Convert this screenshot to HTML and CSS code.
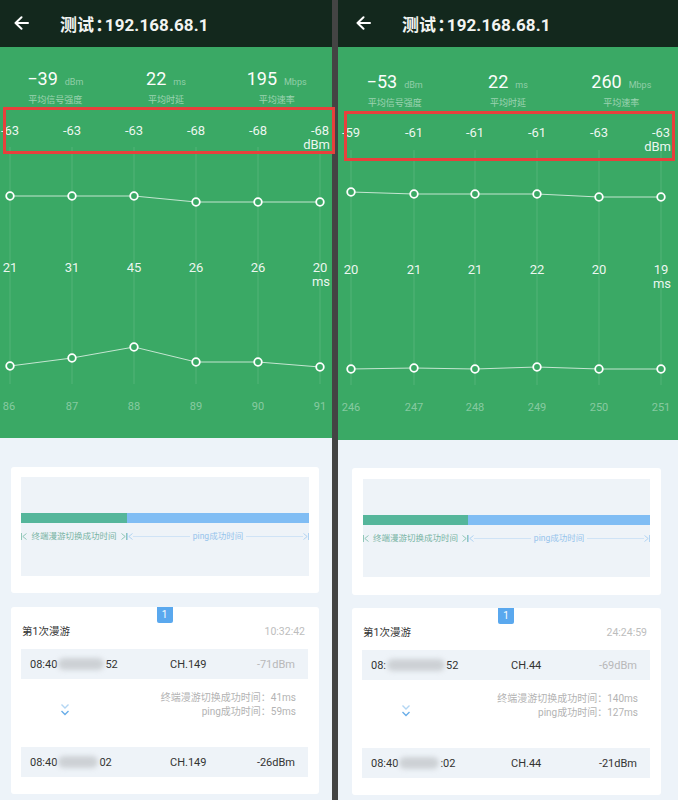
FILE: index.html
```html
<!DOCTYPE html>
<html lang="zh-CN">
<head>
<meta charset="utf-8">
<title>漫游测试</title>
<link rel="stylesheet" href="styles.css">
</head>
<body>
<div class="screen">
  <section class="panel panel-a">
    <header class="topbar">
      <svg class="back" width="15" height="14" viewBox="0 0 15 14"><path d="M1.5 7H14M7.5 1.2L1.5 7l6 5.8" fill="none" stroke="#fff" stroke-width="2" stroke-linecap="round" stroke-linejoin="round"/></svg>
      <h1 class="title">测试<span class="colon">：</span>192.168.68.1</h1>
    </header>
    <div class="green">
      <div class="stats">
        <div class="stat"><div class="stat-val"><span class="num">−39</span><span class="unit">dBm</span></div><div class="stat-label">平均信号强度</div></div>
        <div class="stat"><div class="stat-val"><span class="num">22</span><span class="unit">ms</span></div><div class="stat-label">平均时延</div></div>
        <div class="stat"><div class="stat-val"><span class="num">195</span><span class="unit">Mbps</span></div><div class="stat-label">平均速率</div></div>
      </div>
      <svg class="chart" width="332" height="331" viewBox="0 0 332 331">
        <g class="grid">
          <line x1="10" y1="40" x2="10" y2="277"/><line x1="72" y1="40" x2="72" y2="277"/><line x1="134" y1="40" x2="134" y2="277"/><line x1="196" y1="40" x2="196" y2="277"/><line x1="258" y1="40" x2="258" y2="277"/><line x1="320" y1="40" x2="320" y2="277"/>
        </g>
        <g class="val">
          <text x="10" y="28">-63</text><text x="72" y="28">-63</text><text x="134" y="28">-63</text><text x="196" y="28">-68</text><text x="258" y="28">-68</text><text x="320" y="28">-68</text>
          <text class="u" x="330" y="42">dBm</text>
          <text x="10" y="165">21</text><text x="72" y="165">31</text><text x="134" y="165">45</text><text x="196" y="165">26</text><text x="258" y="165">26</text><text x="320" y="165">20</text>
          <text class="u" x="330" y="179">ms</text>
        </g>
        <polyline class="link" points="10,89 72,89 134,89 196,95 258,95 320,95"/>
        <polyline class="link" points="10,259 72,251 134,240 196,255 258,255 320,260"/>
        <g class="dot">
          <circle cx="10" cy="89" r="3.8"/><circle cx="72" cy="89" r="3.8"/><circle cx="134" cy="89" r="3.8"/><circle cx="196" cy="95" r="3.8"/><circle cx="258" cy="95" r="3.8"/><circle cx="320" cy="95" r="3.8"/>
          <circle cx="10" cy="259" r="3.8"/><circle cx="72" cy="251" r="3.8"/><circle cx="134" cy="240" r="3.8"/><circle cx="196" cy="255" r="3.8"/><circle cx="258" cy="255" r="3.8"/><circle cx="320" cy="260" r="3.8"/>
        </g>
        <g class="idx">
          <text x="9" y="303">86</text><text x="72" y="303">87</text><text x="134" y="303">88</text><text x="196" y="303">89</text><text x="258" y="303">90</text><text x="320" y="303">91</text>
        </g>
      </svg>
      <div class="hilite"></div>
    </div>
    <div class="body">
      <div class="card bar-card">
        <div class="bar-box">
          <div class="bar"><div class="bar-a" style="width:36.8%"></div><div class="bar-b"></div></div>
          <div class="legend">
            <div class="seg seg-a" style="width:36.8%">
              <svg class="cap" width="6" height="7" viewBox="0 0 6 7"><path d="M0.5 0v7M5.5 0.5L1.8 3.5l3.7 3" fill="none" stroke="currentColor" stroke-width="0.9"/></svg>
              <span class="seg-text">终端漫游切换成功时间</span>
              <svg class="cap" width="6" height="7" viewBox="0 0 6 7"><path d="M5.5 0v7M0.5 0.5L4.2 3.5l-3.7 3" fill="none" stroke="currentColor" stroke-width="0.9"/></svg>
            </div>
            <div class="seg seg-b">
              <svg class="cap" width="6" height="7" viewBox="0 0 6 7"><path d="M0.5 0v7M5.5 0.5L1.8 3.5l3.7 3" fill="none" stroke="currentColor" stroke-width="0.9"/></svg>
              <span class="rule"></span>
              <span class="seg-text">ping成功时间</span>
              <span class="rule"></span>
              <svg class="cap" width="6" height="7" viewBox="0 0 6 7"><path d="M5.5 0v7M0.5 0.5L4.2 3.5l-3.7 3" fill="none" stroke="currentColor" stroke-width="0.9"/></svg>
            </div>
          </div>
        </div>
      </div>
      <div class="card roam-card">
        <div class="badge">1</div>
        <div class="roam-head"><span>第1次漫游</span><span class="time">10:32:42</span></div>
        <div class="ap-row">
          <span class="mac">08:40<span class="blur b46"></span>52</span>
          <span>CH.149</span>
          <span class="rssi old">-71dBm</span>
        </div>
        <div class="roam-mid">
          <svg class="chev" width="10" height="16" viewBox="0 0 10 16"><path d="M1.5 1.5L5 5l3.5-3.5" fill="none" stroke="#b3d6f3" stroke-width="1.4"/><path d="M1.5 8L5 11.5 8.5 8" fill="none" stroke="#6aaee9" stroke-width="1.4"/></svg>
          <div class="roam-times"><div>终端漫游切换成功时间：41ms</div><div>ping成功时间：59ms</div></div>
        </div>
        <div class="ap-row">
          <span class="mac">08:40<span class="blur b40"></span>02</span>
          <span>CH.149</span>
          <span class="rssi">-26dBm</span>
        </div>
      </div>
    </div>
  </section>

  <div class="divider"></div>

  <section class="panel panel-b">
    <header class="topbar">
      <svg class="back" width="15" height="14" viewBox="0 0 15 14"><path d="M1.5 7H14M7.5 1.2L1.5 7l6 5.8" fill="none" stroke="#fff" stroke-width="2" stroke-linecap="round" stroke-linejoin="round"/></svg>
      <h1 class="title">测试<span class="colon">：</span>192.168.68.1</h1>
    </header>
    <div class="green">
      <div class="stats">
        <div class="stat"><div class="stat-val"><span class="num">−53</span><span class="unit">dBm</span></div><div class="stat-label">平均信号强度</div></div>
        <div class="stat"><div class="stat-val"><span class="num">22</span><span class="unit">ms</span></div><div class="stat-label">平均时延</div></div>
        <div class="stat"><div class="stat-val"><span class="num">260</span><span class="unit">Mbps</span></div><div class="stat-label">平均速率</div></div>
      </div>
      <svg class="chart" width="340" height="330" viewBox="0 0 340 330">
        <g class="grid">
          <line x1="13" y1="40" x2="13" y2="275"/><line x1="76" y1="40" x2="76" y2="275"/><line x1="137" y1="40" x2="137" y2="275"/><line x1="199" y1="40" x2="199" y2="275"/><line x1="261" y1="40" x2="261" y2="275"/><line x1="323" y1="40" x2="323" y2="275"/>
        </g>
        <g class="val">
          <text x="13" y="27">-59</text><text x="76" y="27">-61</text><text x="137" y="27">-61</text><text x="199" y="27">-61</text><text x="261" y="27">-63</text><text x="323" y="27">-63</text>
          <text class="u" x="333" y="41">dBm</text>
          <text x="13" y="164">20</text><text x="76" y="164">21</text><text x="137" y="164">21</text><text x="199" y="164">22</text><text x="261" y="164">20</text><text x="323" y="164">19</text>
          <text class="u" x="333" y="178">ms</text>
        </g>
        <polyline class="link" points="13,82 76,84 137,84 199,84 261,87 323,87"/>
        <polyline class="link" points="13,259 76,258 137,259 199,257 261,259 323,259"/>
        <g class="dot">
          <circle cx="13" cy="82" r="3.8"/><circle cx="76" cy="84" r="3.8"/><circle cx="137" cy="84" r="3.8"/><circle cx="199" cy="84" r="3.8"/><circle cx="261" cy="87" r="3.8"/><circle cx="323" cy="87" r="3.8"/>
          <circle cx="13" cy="259" r="3.8"/><circle cx="76" cy="258" r="3.8"/><circle cx="137" cy="259" r="3.8"/><circle cx="199" cy="257" r="3.8"/><circle cx="261" cy="259" r="3.8"/><circle cx="323" cy="259" r="3.8"/>
        </g>
        <g class="idx">
          <text x="13" y="301">246</text><text x="76" y="301">247</text><text x="137" y="301">248</text><text x="199" y="301">249</text><text x="261" y="301">250</text><text x="323" y="301">251</text>
        </g>
      </svg>
      <div class="hilite"></div>
    </div>
    <div class="body">
      <div class="card bar-card">
        <div class="bar-box">
          <div class="bar"><div class="bar-a" style="width:36.6%"></div><div class="bar-b"></div></div>
          <div class="legend">
            <div class="seg seg-a" style="width:36.6%">
              <svg class="cap" width="6" height="7" viewBox="0 0 6 7"><path d="M0.5 0v7M5.5 0.5L1.8 3.5l3.7 3" fill="none" stroke="currentColor" stroke-width="0.9"/></svg>
              <span class="seg-text">终端漫游切换成功时间</span>
              <svg class="cap" width="6" height="7" viewBox="0 0 6 7"><path d="M5.5 0v7M0.5 0.5L4.2 3.5l-3.7 3" fill="none" stroke="currentColor" stroke-width="0.9"/></svg>
            </div>
            <div class="seg seg-b">
              <svg class="cap" width="6" height="7" viewBox="0 0 6 7"><path d="M0.5 0v7M5.5 0.5L1.8 3.5l3.7 3" fill="none" stroke="currentColor" stroke-width="0.9"/></svg>
              <span class="rule"></span>
              <span class="seg-text">ping成功时间</span>
              <span class="rule"></span>
              <svg class="cap" width="6" height="7" viewBox="0 0 6 7"><path d="M5.5 0v7M0.5 0.5L4.2 3.5l-3.7 3" fill="none" stroke="currentColor" stroke-width="0.9"/></svg>
            </div>
          </div>
        </div>
      </div>
      <div class="card roam-card">
        <div class="badge">1</div>
        <div class="roam-head"><span>第1次漫游</span><span class="time">24:24:59</span></div>
        <div class="ap-row">
          <span class="mac">08:<span class="blur b58"></span>52</span>
          <span>CH.44</span>
          <span class="rssi old">-69dBm</span>
        </div>
        <div class="roam-mid">
          <svg class="chev" width="10" height="16" viewBox="0 0 10 16"><path d="M1.5 1.5L5 5l3.5-3.5" fill="none" stroke="#b3d6f3" stroke-width="1.4"/><path d="M1.5 8L5 11.5 8.5 8" fill="none" stroke="#6aaee9" stroke-width="1.4"/></svg>
          <div class="roam-times"><div>终端漫游切换成功时间：140ms</div><div>ping成功时间：127ms</div></div>
        </div>
        <div class="ap-row">
          <span class="mac">08:40<span class="blur b40"></span>:02</span>
          <span>CH.44</span>
          <span class="rssi">-21dBm</span>
        </div>
      </div>
    </div>
  </section>
</div>
</body>
</html>
```
FILE: styles.css
```css
* { box-sizing: border-box; }
html, body { margin: 0; padding: 0; }
body {
  background: #474747;
  font-family: Roboto, "Noto Sans CJK SC", sans-serif;
}
.screen {
  display: flex;
  width: 678px;
  height: 800px;
  overflow: hidden;
}
.panel {
  display: flex;
  flex-direction: column;
  height: 800px;
  background: #edf3f9;
  flex: none;
}
.panel-a { width: 332px; }
.panel-b { width: 340px; overflow: hidden; }
.divider { width: 6px; flex: none; background: #444; }

/* top bar */
.topbar {
  height: 47px;
  flex: none;
  background: #13281d;
  display: flex;
  align-items: center;
  padding-left: 14px;
  padding-bottom: 1px;
}
.panel-b .topbar { padding-left: 18px; }
.back { flex: none; display: block; }
.title {
  margin: 0 0 0 31px;
  font-size: 17px;
  font-weight: 700;
  color: #f2f4f2;
  letter-spacing: 0.1px;
  font-feature-settings: "halt";
}
.colon { margin: 0 1px 0 1px; }

/* green chart area */
.green {
  position: relative;
  flex: none;
  height: 391px;
  background: #3aa965;
}
.panel-b .green { height: 393px; }
.stats {
  display: grid;
  grid-template-columns: 1fr 1fr 1fr;
  height: 60px;
  padding-top: 22px;
  color: #fff;
}
.panel-b .stats { height: 63px; padding-top: 25px; }
.stat-val {
  display: flex;
  justify-content: center;
  align-items: baseline;
  line-height: 20px;
}
.num { font-size: 18px; color: #fbfdfb; }
.unit { font-size: 9px; margin-left: 7px; color: rgba(255,255,255,0.45); }
.stat-label {
  margin-top: 2px;
  font-size: 9px;
  line-height: 12px;
  text-align: center;
  color: rgba(255,255,255,0.5);
}
.chart { display: block; }
.grid line { stroke: rgba(255,255,255,0.16); stroke-width: 0.8; }
.val text {
  fill: rgba(255,255,255,0.92);
  font-family: Roboto, sans-serif;
  font-size: 13px;
  text-anchor: middle;
}
.val text.u { text-anchor: end; }
.link { fill: none; stroke: rgba(255,255,255,0.7); stroke-width: 1; }
.dot circle { fill: #3aa965; stroke: #fff; stroke-width: 1.8; }
.idx text {
  fill: rgba(255,255,255,0.4);
  font-family: Roboto, sans-serif;
  font-size: 11px;
  text-anchor: middle;
}
.hilite {
  position: absolute;
  z-index: 2;
  left: 3px;
  top: 60px;
  width: 332px;
  height: 47px;
  border: 3px solid #e8403c;
}
.panel-b .hilite { left: 6px; top: 64px; width: 331px; height: 50px; }

/* body */
.body {
  flex: 1;
  padding: 29px 13px 0 11px;
  display: flex;
  flex-direction: column;
  gap: 14px;
}
.panel-b .body { padding: 28px 17px 0 14px; gap: 13px; }
.card { background: #fff; border-radius: 3px; }
.bar-card { padding: 10px 10px 17px; }
.panel-b .bar-card { padding: 11px 11px 18px; }
.bar-box {
  height: 99px;
  background: #eef3f8;
  padding-top: 36px;
}
.panel-b .bar-box { height: 98px; }
.bar { display: flex; height: 10px; }
.bar-a { background: #55b69b; }
.bar-b { flex: 1; background: #80bdf4; }
.legend {
  display: flex;
  margin-top: 7px;
  font-size: 8.5px;
  line-height: 12px;
}
.seg { display: flex; align-items: center; }
.seg-a { color: #86c2b1; justify-content: space-between; }
.seg-a .seg-text { color: #78b3a4; }
.seg-b { flex: 1; color: #a9cff1; }
.seg-b .seg-text { color: #96c4ec; margin: 0 3px; }
.cap { display: block; flex: none; }
.rule { flex: 1; height: 1px; background: #cfe3f6; }

.roam-card { padding: 0 11px 17px 10px; }
.badge {
  width: 16px;
  height: 16px;
  margin: 0 auto;
  background: #5aa8ee;
  color: #fff;
  font-size: 10px;
  line-height: 16px;
  text-align: center;
  border-radius: 0 0 2px 2px;
}
.roam-head {
  display: flex;
  justify-content: space-between;
  margin-top: 2px;
  padding: 0 3px 0 1px;
  font-size: 10.5px;
  line-height: 14px;
  color: #333;
}
.roam-head .time { color: #bdbdbd; }
.ap-row {
  display: grid;
  grid-template-columns: 140px 1fr auto;
  align-items: center;
  height: 30px;
  margin-top: 10px;
  padding: 0 13px 0 9px;
  background: #eef3f8;
  font-size: 11px;
  color: #333;
}
.roam-mid + .ap-row { margin-top: 0; }
.mac { display: flex; align-items: center; white-space: nowrap; }
.blur {
  display: inline-block;
  height: 12px;
  margin: 0 1px;
  background: #cdd1d5;
  border-radius: 6px;
  filter: blur(2.5px);
}
.b40 { width: 40px; }
.b46 { width: 46px; }
.b58 { width: 58px; }
.rssi.old { color: #b8b8b8; }
.roam-mid {
  height: 68px;
  display: flex;
  justify-content: space-between;
  align-items: flex-start;
  padding: 12px 12px 0 39px;
}
.chev { display: block; margin-top: 12px; }
.roam-times {
  text-align: right;
  font-size: 10px;
  line-height: 13.5px;
  color: #b3b3b3;
}
```
